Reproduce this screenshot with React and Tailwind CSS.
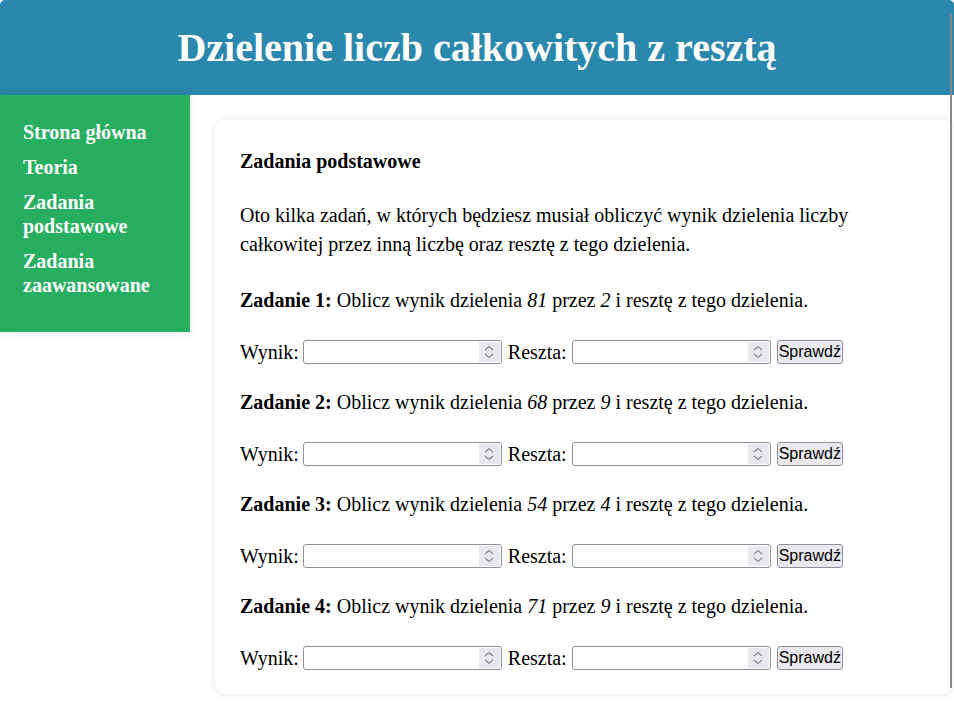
import React from "react";

const tasks = [
  { n: 1, a: 81, b: 2 },
  { n: 2, a: 68, b: 9 },
  { n: 3, a: 54, b: 4 },
  { n: 4, a: 71, b: 9 },
];

const links = ["Strona główna", "Teoria", "Zadania podstawowe", "Zadania zaawansowane"];

// number field with the spin box always drawn, as in the screenshot
const NumberInput = () => (
  <div className="w-[199px] h-[24px] flex items-center border border-[#8f8f9d] rounded-[3px] bg-white p-[1px]">
    <input type="text" className="flex-1 min-w-0 h-full px-[2px] text-[16px] outline-none bg-transparent" />
    <div className="w-[21px] h-[20px] bg-[#e9e9ed] flex flex-col items-center justify-center gap-[2px]">
      <svg width="10" height="6" viewBox="0 0 10 6" fill="none">
        <path d="M1 5L5 1.5L9 5" stroke="#8a8a94" strokeWidth="1.2" />
      </svg>
      <svg width="10" height="6" viewBox="0 0 10 6" fill="none">
        <path d="M1 1L5 4.5L9 1" stroke="#8a8a94" strokeWidth="1.2" />
      </svg>
    </div>
  </div>
);

const Task = ({ n, a, b }) => (
  <>
    <p className={`${n === 1 ? "mt-[27px]" : "mt-[22px]"} leading-[29px]`}>
      <b>Zadanie {n}:</b> Oblicz wynik dzielenia <i>{a}</i> przez <i>{b}</i> i
      resztę z tego dzielenia.
    </p>
    <div className="mt-[22px] h-[29px] flex items-center">
      <span>Wynik:</span>
      <span className="ml-[4px] flex">
        <NumberInput />
      </span>
      <span className="ml-[6px]">Reszta:</span>
      <span className="ml-[5px] flex">
        <NumberInput />
      </span>
      <button className="ml-[6px] w-[66px] h-[24px] px-[1px] border border-[#8f8f9d] rounded-[3px] bg-[#e9e9ed] text-[16px] font-['Liberation_Sans',Arial,sans-serif] text-black leading-none">
        Sprawdź
      </button>
    </div>
  </>
);

export default function App() {
  return (
    <div className="relative w-[954px] min-h-[710px] bg-white font-['Liberation_Serif','Times_New_Roman',serif] text-[20px] text-black">
      <header className="h-[95px] bg-[#2b88ad] rounded-t-[5px] flex items-center justify-center">
        <h1 className="text-white font-bold text-[40px] leading-none">
          Dzielenie liczb całkowitych z resztą
        </h1>
      </header>
      <div className="flex items-start">
        <nav className="w-[190px] shrink-0 bg-[#27ae60] pt-[25px] pb-[35px] pl-[23px] pr-[10px] shadow-[0_0_10px_rgba(0,0,0,0.1)]">
          <ul className="flex flex-col gap-[11px]">
            {links.map((l) => (
              <li key={l} className="text-white font-bold leading-[24px]">
                {l}
              </li>
            ))}
          </ul>
        </nav>
        <main className="flex-1 ml-[25px] mt-[25px] mr-[1px] bg-white rounded-[10px] shadow-[0_0_10px_rgba(0,0,0,0.1)] pt-[27px] pb-[22px] pl-[25px] pr-[25px]">
          <h3 className="font-bold leading-[29px]">Zadania podstawowe</h3>
          <p className="mt-[25px] leading-[29px]">
            Oto kilka zadań, w których będziesz musiał obliczyć wynik dzielenia liczby
            całkowitej przez inną liczbę oraz resztę z tego dzielenia.
          </p>
          {tasks.map((t) => (
            <Task key={t.n} {...t} />
          ))}
        </main>
      </div>
      <div className="absolute top-[13px] right-[2px] w-[2px] h-[675px] bg-[#888]" />
    </div>
  );
}
